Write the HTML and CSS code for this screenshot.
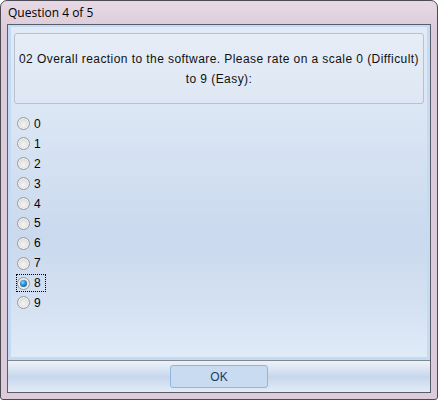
FILE: index.html
```html
<!DOCTYPE html>
<html>
<head>
<meta charset="utf-8">
<link rel="stylesheet" href="styles.css">
</head>
<body>
<div class="window">
  <div class="titlebar">Question 4 of 5</div>
  <div class="client">
    <div class="panel">
      <div class="question">02 Overall reaction to the software. Please rate on a scale 0 (Difficult) to 9 (Easy):</div>
      <div class="options">
        <div class="opt"><span class="radio"></span><span class="lbl">0</span></div>
        <div class="opt"><span class="radio"></span><span class="lbl">1</span></div>
        <div class="opt"><span class="radio"></span><span class="lbl">2</span></div>
        <div class="opt"><span class="radio"></span><span class="lbl">3</span></div>
        <div class="opt"><span class="radio"></span><span class="lbl">4</span></div>
        <div class="opt"><span class="radio"></span><span class="lbl">5</span></div>
        <div class="opt"><span class="radio"></span><span class="lbl">6</span></div>
        <div class="opt"><span class="radio"></span><span class="lbl">7</span></div>
        <div class="opt focused"><span class="radio checked"></span><span class="lbl">8</span></div>
        <div class="opt"><span class="radio"></span><span class="lbl">9</span></div>
      </div>
    </div>
    <div class="buttonbar">
      <div class="btn">OK</div>
    </div>
  </div>
</div>
</body>
</html>
```
FILE: styles.css
```css
html, body {
  margin: 0;
  padding: 0;
  background: #ffffff;
}
.window {
  box-sizing: border-box;
  width: 438px;
  height: 400px;
  border: 1px solid #4e4a52;
  border-radius: 7px 7px 3px 3px;
  background: linear-gradient(180deg, #e6d9e5 0px, #dccbda 30px, #dccbda 100%);
  display: flex;
  flex-direction: column;
  font-family: "Liberation Sans", Arial, sans-serif;
  color: #000;
}
.titlebar {
  height: 23px;
  padding-left: 7px;
  font-size: 12px;
  line-height: 23px;
  color: #000;
  font-family: "Open Sans", "Liberation Sans", sans-serif;
}
.client {
  flex: 1;
  margin: 0 6px 6px;
  border: 1px solid #5c5c66;
  display: flex;
  flex-direction: column;
  min-height: 0;
}
.panel {
  flex: 1;
  border: 3px solid #c4dbf6;
  border-top-width: 2px;
  padding: 6px 3px 0 3px;
  background: linear-gradient(180deg, #e1eaf6 0px, #dbe6f4 90px, #cad9ee 210px, #d3e0f1 270px, #e0ebf8 330px);
  display: flex;
  flex-direction: column;
}
.question {
  height: 71px;
  box-sizing: border-box;
  border: 1px solid #b9c2cc;
  border-radius: 3px;
  background: linear-gradient(180deg, #e6edf7, #dee7f3);
  display: flex;
  align-items: center;
  justify-content: center;
  text-align: center;
  padding: 0 4px;
  font-size: 12px;
  letter-spacing: 0.43px;
  line-height: 20px;
  color: #111;
}
.options {
  display: flex;
  flex-direction: column;
  padding-top: 10px;
  padding-left: 2px;
}
.opt {
  display: flex;
  align-items: center;
  height: 19.9px;
  gap: 4px;
  font-size: 12px;
  color: #000;
  align-self: flex-start;
  padding: 0 4px 0 0;
  box-sizing: border-box;
  border: 1px dotted transparent;
}
.opt.focused {
  border-color: #000;
  height: 17.9px;
  margin: 1px 0;
}
.radio {
  width: 11px;
  height: 11px;
  border-radius: 50%;
  border: 1px solid #9a9a9a;
  background: radial-gradient(circle at 50% 60%, #f4f4f4 0, #e2e2e2 50%, #c8c8c8 100%);
  box-shadow: inset 0 0 0 1px #f2f2f2;
  position: relative;
}
.radio.checked::after {
  content: "";
  position: absolute;
  left: 2px;
  top: 2px;
  width: 7px;
  height: 7px;
  border-radius: 50%;
  background: radial-gradient(circle at 40% 35%, #8fd6ff 0, #2a8ad0 45%, #0d4f86 100%);
}
.buttonbar {
  height: 31px;
  border-top: 1px solid #7f868e;
  background: linear-gradient(180deg, #edf2f9 0, #dbe6f3 8px, #c6d6ec 16px, #d6e2f1 24px, #e3ecf7 31px);
  display: flex;
  align-items: center;
  justify-content: center;
}
.btn {
  width: 98px;
  height: 23px;
  box-sizing: border-box;
  border: 1px solid #95b5de;
  border-radius: 3px;
  background: #c9dbf1;
  display: flex;
  align-items: center;
  justify-content: center;
  font-size: 12px;
  color: #1e3a5f;
}
```
